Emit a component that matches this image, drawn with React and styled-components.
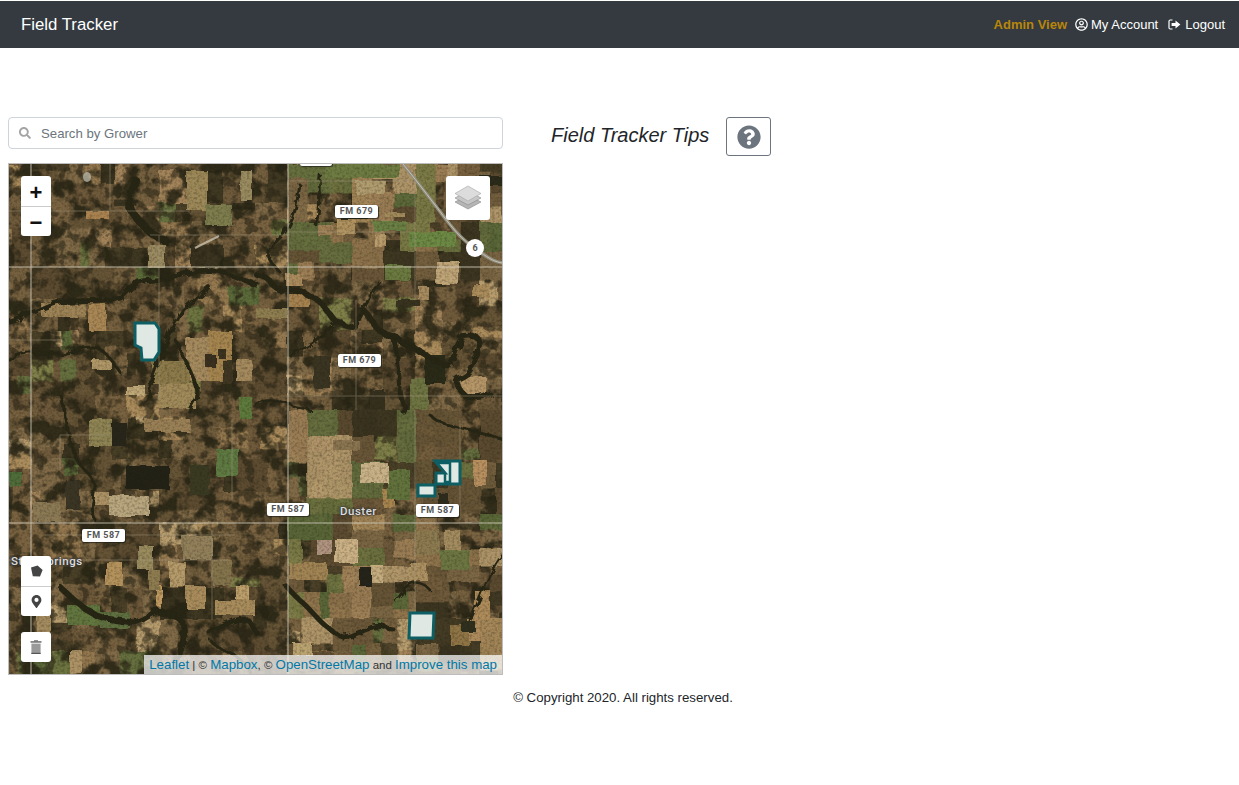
import React, { useMemo } from "react";
import styled, { createGlobalStyle } from "styled-components";
import { FaSearch, FaQuestionCircle, FaMapMarkerAlt, FaRegUserCircle } from "react-icons/fa";

const Global = createGlobalStyle`
  html, body { margin: 0; padding: 0; background: #fff; }
  body { font-family: "Liberation Sans", Arial, sans-serif; color: #212529; }
  * { box-sizing: border-box; }
`;

const Page = styled.div`
  padding-top: 1px;
  min-height: 785px;
  background: #fff;
`;
const Navbar = styled.nav`
  height: 47px;
  background: #343a40;
  display: flex;
  align-items: center;
  justify-content: space-between;
  padding: 0 14px 0 21px;
`;
const Brand = styled.a`
  color: #fff;
  font-size: 16.8px;
  line-height: 1;
  margin-top: 1px;
`;
const NavLinks = styled.div`
  display: flex;
  align-items: center;
  gap: 10px;
  font-size: 13px;
`;
const NavLink = styled.a`
  display: flex;
  align-items: center;
  gap: ${(p) => p.$gap || 4}px;
  color: ${(p) => (p.$admin ? "#b8860b" : "#fff")};
  font-weight: ${(p) => (p.$admin ? 700 : 400)};
  margin-right: ${(p) => (p.$admin ? "-2px" : "0")};
`;
const Main = styled.main`
  display: flex;
  align-items: flex-start;
  padding: 69px 8px 0;
`;
const LeftColumn = styled.section`
  width: 495px;
  display: flex;
  flex-direction: column;
  gap: 14px;
`;
const SearchBox = styled.label`
  height: 32px;
  border: 1px solid #ced4da;
  border-radius: 4px;
  display: flex;
  align-items: center;
  gap: 10px;
  padding: 0 10px;
  color: #a5a5a5;
`;
const SearchInput = styled.input`
  flex: 1;
  border: 0;
  outline: 0;
  padding: 0;
  font: 13.2px "Liberation Sans", Arial, sans-serif;
  color: #495057;
  &::placeholder { color: #6c757d; opacity: 1; }
`;
const MapFrame = styled.div`
  position: relative;
  height: 512px;
  border: 1px solid #bdbdbd;
  overflow: hidden;
  background: #5f5236;
`;
const Terrain = styled.svg`
  display: block;
  width: 493px;
  height: 510px;
`;
const ControlStack = styled.div`
  position: absolute;
  left: 12px;
  top: ${(p) => p.$top}px;
  width: 30px;
  background: #fff;
  border-radius: 3px;
  display: flex;
  flex-direction: column;
`;
const ControlButton = styled.div`
  height: 30px;
  display: flex;
  align-items: center;
  justify-content: center;
  color: ${(p) => p.$color || "#111"};
  font-size: ${(p) => p.$size || 22}px;
  font-weight: 700;
  line-height: 1;
  padding-top: ${(p) => p.$drop || 0}px;
  & + & { border-top: 1px solid #ccc; }
`;
const LayersButton = styled.div`
  position: absolute;
  right: 12px;
  top: 12px;
  width: 44px;
  height: 44px;
  background: #fff;
  border-radius: 3px;
  display: flex;
  align-items: center;
  justify-content: center;
`;
const RoadLabel = styled.span`
  position: absolute;
  left: ${(p) => p.$x}px;
  top: ${(p) => p.$y}px;
  width: ${(p) => p.$w || 43}px;
  height: 13px;
  background: #fff;
  border-radius: 2px;
  box-shadow: 0 0 1px #222, 1px 1px 1px rgba(30, 30, 20, 0.7);
  color: #555;
  font: 700 9px/13px Roboto, sans-serif;
  letter-spacing: 0.5px;
  text-align: center;
`;
const PlaceLabel = styled.span`
  position: absolute;
  left: ${(p) => p.$x}px;
  top: ${(p) => p.$y}px;
  color: #dcdcdc;
  font: 500 11.5px/14px Roboto, sans-serif;
  letter-spacing: 0.5px;
  text-shadow: 0 0 2px #3a3a3a, 0 0 2px #3a3a3a, 0 0 3px #3a3a3a;
  white-space: nowrap;
`;
const Shield = styled.span`
  position: absolute;
  left: 457px;
  top: 75px;
  width: 18px;
  height: 18px;
  background: #fff;
  border-radius: 50%;
  color: #555;
  font: 700 9px/18px Roboto, sans-serif;
  text-align: center;
`;
const Attribution = styled.div`
  position: absolute;
  right: 0;
  bottom: 0;
  height: 19px;
  padding: 0 5px;
  background: rgba(255, 255, 255, 0.72);
  font-size: 11.5px;
  line-height: 19px;
  color: #333;
  white-space: nowrap;
`;
const AttributionLink = styled.a`
  color: #0078a8;
  font-size: 13.3px;
`;
const TipsColumn = styled.section`
  margin-left: 48px;
  display: flex;
  align-items: center;
  gap: 17px;
`;
const TipsTitle = styled.h2`
  margin: 0 0 2px;
  font-size: 20px;
  font-weight: 400;
  font-style: italic;
  color: #212529;
`;
const TipsButton = styled.button`
  width: 45px;
  height: 39px;
  border: 1px solid #6c757d;
  border-radius: 3px;
  background: #fff;
  color: #6c757d;
  display: flex;
  align-items: center;
  justify-content: center;
  padding: 0;
  font-size: 24px;
`;
const Footer = styled.footer`
  margin-top: 15px;
  padding-left: 7px;
  text-align: center;
  font-size: 13.25px;
  line-height: 15px;
  color: #212529;
`;

function rng(seed) {
  let a = seed;
  return () => {
    a |= 0;
    a = (a + 0x6d2b79f5) | 0;
    let t = Math.imul(a ^ (a >>> 15), 1 | a);
    t = (t + Math.imul(t ^ (t >>> 7), 61 | t)) ^ t;
    return ((t ^ (t >>> 14)) >>> 0) / 4294967296;
  };
}

const DARK = ["#3f3822", "#3a3420", "#4a4028"];
const BROWN = ["#6f5a3b", "#7a6341", "#665436", "#5d4c31", "#75603f", "#806a47"];
const TAN = ["#a3845a", "#ab8c5c", "#94784f", "#b79c6e"];
const GREEN = ["#6d7440", "#5c6b3a", "#7f8049", "#66703f"];
const pick = (r, list) => list[Math.floor(r() * list.length)];

function baseColor(r) {
  const v = r();
  if (v < 0.12) return pick(r, DARK);
  if (v < 0.2) return pick(r, GREEN);
  if (v < 0.3) return pick(r, TAN);
  return pick(r, BROWN);
}
function cropColor(r) {
  const v = r();
  if (v < 0.1) return pick(r, DARK);
  if (v < 0.42) return pick(r, GREEN);
  if (v < 0.72) return pick(r, TAN);
  return pick(r, BROWN);
}
function subdivide(r, x, y, w, h, out, color) {
  if (w < 22 || h < 16 || (w < 50 && h < 40 && r() < 0.35)) {
    out.push({ x, y, w, h, c: color(r) });
    return;
  }
  const f = r() < 0.5 ? 0.5 : r() < 0.5 ? 0.3 : 0.7;
  if (w > h) {
    subdivide(r, x, y, w * f, h, out, color);
    subdivide(r, x + w * f, y, w * (1 - f), h, out, color);
  } else {
    subdivide(r, x, y, w, h * f, out, color);
    subdivide(r, x, y + h * f, w, h * (1 - f), out, color);
  }
}

const F = (x1, y1, x2, y2, c) => ({ x: x1, y: y1, w: x2 - x1, h: y2 - y1, c });
const HAND_FIELDS = [
  F(86, 211, 109, 219, "#ab8350"), F(89, 304, 106, 331, "#a98755"), F(42, 304, 86, 317, "#9d8356"),
  F(209, 331, 232, 381, "#a5854f"), F(186, 337, 209, 381, "#a58a5e"), F(236, 360, 252, 381, "#a58a5e"),
  F(218, 349, 226, 358, "#3d3420"), F(222, 360, 232, 383, "#3f3722"), F(152, 360, 190, 384, "#8c7a4a"),
  F(159, 384, 195, 408, "#a08a5a"), F(126, 386, 146, 396, "#c0a878"), F(93, 360, 112, 370, "#b09768"),
  F(148, 244, 165, 268, "#9a8a60"), F(186, 171, 208, 210, "#9c8858"), F(205, 205, 232, 225, "#7d7d4e"),
  F(240, 397, 252, 419, "#5d7a3c"), F(240, 170, 252, 200, "#9a8c60"),
  F(336, 217, 356, 234, "#b0925f"), F(374, 234, 386, 246, "#b99c6c"), F(436, 261, 459, 284, "#bfa577"),
  F(418, 286, 428, 299, "#a88c60"), F(473, 284, 489, 297, "#ab8d5c"), F(459, 377, 486, 394, "#b59668"),
  F(286, 274, 303, 286, "#a98a5c"), F(289, 294, 309, 307, "#a5824f"), F(356, 181, 386, 194, "#b09c6e"),
  F(409, 232, 456, 247, "#6d8a45"), F(373, 221, 406, 231, "#6a8044"), F(325, 164, 400, 178, "#6e7c42"),
  F(288, 164, 320, 178, "#66703e"), F(385, 213, 405, 217, "#a08a5a"), F(385, 265, 410, 280, "#6b7a40"),
  F(318, 225, 332, 236, "#9e8056"), F(256, 308, 288, 318, "#8e7e50"), F(410, 378, 428, 410, "#6e7442"),
  F(360, 463, 388, 483, "#c9b288"), F(335, 540, 358, 563, "#cbb185"), F(317, 540, 332, 555, "#b09480"),
  F(370, 565, 383, 583, "#c5ad7f"), F(290, 563, 327, 580, "#a18454"), F(473, 460, 487, 485, "#b89060"),
  F(293, 643, 312, 655, "#bba471"), F(410, 563, 427, 580, "#ad9162"), F(310, 440, 333, 450, "#b09368"),
  F(333, 440, 360, 450, "#8a7550"), F(383, 490, 395, 507, "#a98650"), F(415, 530, 440, 555, "#8c7a50"),
  F(445, 530, 460, 550, "#a38c5f"), F(474, 590, 490, 620, "#ad8b5a"), F(440, 550, 470, 570, "#6c7642"),
  F(388, 470, 410, 500, "#62733d"), F(450, 625, 470, 645, "#8f7445"), F(468, 620, 482, 640, "#ad8b5c"),
  F(106, 562, 122, 586, "#b4925c"), F(169, 562, 186, 586, "#b59a6a"), F(156, 586, 162, 612, "#c09a60"),
  F(186, 586, 205, 609, "#a98c5c"), F(236, 586, 249, 609, "#bd9f6b"), F(92, 492, 109, 505, "#ac9265"),
  F(109, 496, 149, 516, "#b8a67e"), F(182, 536, 212, 559, "#92805a"), F(89, 419, 112, 446, "#8e8454"),
  F(216, 449, 239, 476, "#5f7a42"), F(9, 472, 22, 486, "#4f6e3a"), F(145, 419, 190, 432, "#9a8056"),
  F(212, 560, 232, 585, "#84744c"), F(138, 545, 153, 570, "#9a8c5e"), F(149, 570, 160, 590, "#8e7c50"),
  F(215, 600, 255, 615, "#a88c5c"), F(67, 605, 100, 625, "#62763f"), F(70, 650, 82, 674, "#ad9265"),
  F(36, 608, 50, 634, "#a48c60"), F(100, 612, 130, 628, "#5f7040"), F(34, 502, 60, 522, "#8c7a55"),
];

const DARK_PATCHES = [
  F(126, 466, 169, 489, "#232216"), F(112, 422, 126, 446, "#28261a"), F(360, 567, 372, 587, "#25241a"),
  F(480, 176, 503, 186, "#2a2a1a"), F(425, 355, 445, 384, "#2a2a18"), F(190, 465, 210, 495, "#3a3a22"),
  F(369, 390, 385, 410, "#35301e"), F(314, 355, 330, 388, "#3a3522"), F(462, 622, 476, 632, "#30301e"),
  F(66, 480, 80, 510, "#3a3524"), F(206, 355, 216, 368, "#3a3020"), F(340, 215, 368, 219, "#35331f"),
  F(395, 300, 420, 306, "#37331f"), F(438, 493, 448, 507, "#2e2c1c"),
];

const RIVERS = [
  ["M256,274 C262,276 267,278 269,280 S274,288 278,289 S295,289 299,291 S314,297 320,302 S330,318 336,321 S350,328 353,327 S360,312 363,311 S372,322 376,327 S388,336 393,337 S402,342 406,344 S422,352 429,357 S445,366 449,364 S458,340 463,337 S478,336 479,341 S474,364 469,371 S455,378 456,381 S462,396 469,397 S484,396 489,394", 6],
  ["M256,284 C240,280 228,272 216,271 S200,270 196,271 S184,274 176,277 S150,280 142,281 S128,292 122,297 S80,300 66,301 S40,310 29,314 S14,320 9,321", 5],
  ["M209,287 C198,296 192,302 186,307 S180,316 176,321 S170,336 166,344 S157,368 152,381 S150,392 149,397", 4],
  ["M176,341 C182,352 190,370 196,384 S193,402 190,412", 3.5],
  ["M136,181 C132,190 130,198 129,204 S142,224 149,231 S160,238 166,241", 8],
  ["M62,589 C70,596 78,604 86,609 S100,618 109,619 S130,623 136,622 S150,614 156,612 S172,616 179,619 S184,638 182,646 S178,656 176,659", 6],
  ["M209,632 C220,626 232,620 242,619 S252,628 256,632", 5],
  ["M287,587 C294,595 298,599 303,603 S320,622 327,627 S338,636 343,637 S364,630 373,627 S388,629 393,630", 5],
  ["M393,337 C398,350 398,370 400,390 S408,405 404,412", 5],
  ["M363,311 C368,300 372,290 380,282", 3],
  ["M290,355 C310,345 325,335 336,321", 3],
  ["M300,185 C296,205 295,225 278,240 S270,262 280,272", 3],
  ["M320,175 C318,190 322,205 316,225", 2.5],
  ["M10,360 C30,345 45,360 70,352 S100,342 120,372", 3],
  ["M60,395 C70,420 65,450 85,470 S88,500 95,520", 3],
  ["M470,620 C480,600 490,570 503,555", 3],
  ["M395,600 C405,585 415,575 430,590", 2.5],
  ["M430,415 C445,430 470,425 503,440", 3],
  ["M256,404 C270,395 285,405 310,410", 2.5],
  ["M210,640 C222,655 240,650 252,675", 3],
];
const MAIN_ROADS = ["M31,164V675", "M288,164V675", "M9,267H503", "M9,523H503"];
const MINOR_ROADS = [
  "M159,235V400", "M110,164V210", "M9,211H190", "M150,235H290", "M415,180V300", "M415,410V640",
  "M460,420V520", "M356,300V410", "M288,396H503", "M60,435H110", "M60,435V470", "M9,560H230",
  "M232,419V500", "M212,530V620", "M9,340H60", "M288,232H410", "M290,181H412", "M45,535H235",
];

const sRGB = { colorInterpolationFilters: "sRGB" };

function MapTerrain() {
  const { base, crops } = useMemo(() => {
    const r = rng(77);
    const b = [];
    const c = [];
    for (let sx = -97; sx < 503; sx += 128) {
      for (let sy = 11; sy < 680; sy += 128) {
        subdivide(r, sx, sy, 128, 128, b, baseColor);
      }
    }
    for (let sx = 288; sx < 503; sx += 64) {
      for (let sy = 164; sy < 280; sy += 58) subdivide(r, sx, sy, 64, 58, c, cropColor);
      for (let sy = 410; sy < 620; sy += 52) subdivide(r, sx, sy, 64, 52, c, cropColor);
    }
    return { base: b, crops: c };
  }, []);
  return (
    <Terrain viewBox="9 164 493 510" preserveAspectRatio="none">
      <defs>
        <filter id="all" x="0" y="0" width="100%" height="100%" {...sRGB}>
          <feGaussianBlur stdDeviation="0.55" />
        </filter>
        <filter id="wobble" x="-5%" y="-5%" width="110%" height="110%" {...sRGB}>
          <feTurbulence type="fractalNoise" baseFrequency="0.06" numOctaves="2" seed="5" result="n" />
          <feDisplacementMap in="SourceGraphic" in2="n" scale="5" />
        </filter>
        <filter id="river" x="-5%" y="-5%" width="110%" height="110%" {...sRGB}>
          <feTurbulence type="fractalNoise" baseFrequency="0.1" numOctaves="3" seed="3" result="n" />
          <feDisplacementMap in="SourceGraphic" in2="n" scale="7" />
        </filter>
        <filter id="woods" x="0" y="0" width="100%" height="100%" {...sRGB}>
          <feTurbulence type="fractalNoise" baseFrequency="0.05" numOctaves="4" seed="11" />
          <feColorMatrix values="0 0 0 0 0.15  0 0 0 0 0.14  0 0 0 0 0.08  6 0 0 0 -3" />
        </filter>
        <filter id="woods2" x="0" y="0" width="100%" height="100%" {...sRGB}>
          <feTurbulence type="fractalNoise" baseFrequency="0.09" numOctaves="3" seed="23" />
          <feColorMatrix values="0 0 0 0 0.17  0 0 0 0 0.15  0 0 0 0 0.09  0 7 0 0 -3.6" />
        </filter>
        <filter id="grain" x="0" y="0" width="100%" height="100%" {...sRGB}>
          <feTurbulence type="fractalNoise" baseFrequency="0.4" numOctaves="2" seed="2" />
          <feColorMatrix values="0 0 0 0 0.12  0 0 0 0 0.1  0 0 0 0 0.05  0 0 0 1.8 -0.75" />
        </filter>
      </defs>
      <g filter="url(#all)">
        <rect x="9" y="164" width="493" height="510" fill="#6a573a" />
        <g filter="url(#wobble)">
          {base.map((f, i) => (
            <rect key={i} x={f.x} y={f.y} width={f.w + 0.5} height={f.h + 0.5} fill={f.c} />
          ))}
        </g>
        <rect x="9" y="164" width="493" height="510" filter="url(#woods)" opacity="0.85" />
        <rect x="9" y="164" width="493" height="510" filter="url(#woods2)" opacity="0.6" />
        <g opacity="0.9" filter="url(#wobble)">
          {crops.map((f, i) => (i % 5 === 4 ? null : (
            <rect key={i} x={f.x} y={f.y} width={f.w + 0.5} height={f.h + 0.5} fill={f.c} />
          )))}
        </g>
        <g filter="url(#wobble)">
          {HAND_FIELDS.map((f, i) => (
            <rect key={i} x={f.x} y={f.y} width={f.w} height={f.h} fill={f.c} />
          ))}
          {DARK_PATCHES.map((f, i) => (
            <rect key={i} x={f.x} y={f.y} width={f.w} height={f.h} fill={f.c} />
          ))}
        </g>
        <g filter="url(#river)" fill="none" strokeLinecap="round">
          {RIVERS.map(([d, w], i) => (
            <path key={i} d={d} stroke="#272615" strokeWidth={w} />
          ))}
        </g>
        <rect x="9" y="164" width="493" height="510" filter="url(#grain)" opacity="0.4" />
        <g fill="none" strokeWidth="1" stroke="#a89c80" opacity="0.45">
          {MINOR_ROADS.map((d, i) => <path key={i} d={d} />)}
        </g>
        <path d="M403,164 C420,185 435,205 448,222 S470,245 480,252 S495,262 503,263" fill="none" stroke="#8f8c7c" strokeWidth="3.5" />
        <path d="M403,164 C420,185 435,205 448,222 S470,245 480,252 S495,262 503,263" fill="none" stroke="#c5c2b4" strokeWidth="1" />
        <path d="M219,236 L195,248" fill="none" stroke="#c8c2ae" strokeWidth="2" opacity="0.8" />
        <ellipse cx="87" cy="177" rx="4" ry="5" fill="#c8c5b6" opacity="0.7" />
      </g>
      <g fill="none" strokeWidth="1" stroke="#d2cdbc" opacity="0.85">
        {MAIN_ROADS.map((d, i) => <path key={i} d={d} />)}
      </g>
      <g fill="#dfe8e2" stroke="#0d5f64" strokeWidth="3" strokeLinejoin="miter">
        <polygon points="135,323 155,323 159,329 159,352 154,360 142,360 141,348 135,345" />
        <polygon points="410,613 434,613 433,638 409,638" />
        <polygon points="418,485 435,485 435,496 418,496" />
        <polygon points="435,461 460,461 460,484 436,484 436,473 445,473" />
        <path d="M436,463 H450 V482 H445 V473" fill="none" strokeWidth="2.5" />
      </g>
    </Terrain>
  );
}

const LogoutIcon = () => (
  <svg width="13" height="11" viewBox="0 0 13 11" aria-hidden="true">
    <path d="M4.5 1H2.2C1.5 1 1 1.5 1 2.2v6.6C1 9.5 1.5 10 2.2 10h2.3" fill="none" stroke="#fff" strokeWidth="1.2" />
    <path d="M3.6 4h3.9V1.6L12.4 5.5 7.5 9.4V7H3.6z" fill="#fff" />
  </svg>
);
const LayersIcon = () => (
  <svg width="28" height="28" viewBox="0 0 28 28" aria-hidden="true">
    <path d="M14 11 L27 18 L14 25 L1 18Z" fill="#b5b5b5" stroke="#8a8a8a" strokeWidth="0.6" />
    <path d="M14 7 L27 14 L14 21 L1 14Z" fill="#c6c6c6" stroke="#8a8a8a" strokeWidth="0.6" />
    <path d="M14 2 L27 9.5 L14 17 L1 9.5Z" fill="#dcdcdc" stroke="#a5a5a5" strokeWidth="0.6" />
  </svg>
);
const PentagonIcon = () => (
  <svg width="13" height="12" viewBox="0 0 13 12" aria-hidden="true">
    <path d="M1 2.6 7.6 0.4 12.6 5 10 11.4 2.8 11.2Z" fill="#444" />
  </svg>
);
const TrashIcon = () => (
  <svg width="12" height="14" viewBox="0 0 12 14" aria-hidden="true">
    <rect x="4" y="0.3" width="4" height="1" fill="#666" />
    <rect x="0.5" y="1.3" width="11" height="1.3" fill="#555" />
    <path d="M1.4 3.6h9.2V14H1.4z" fill="#999" />
    <rect x="1.4" y="12.8" width="9.2" height="1.2" fill="#555" />
  </svg>
);

export default function App() {
  return (
    <Page>
      <Global />
      <Navbar>
        <Brand>Field Tracker</Brand>
        <NavLinks>
          <NavLink $admin>Admin View</NavLink>
          <NavLink $gap={3}><FaRegUserCircle size={13} />My Account</NavLink>
          <NavLink><LogoutIcon />Logout</NavLink>
        </NavLinks>
      </Navbar>
      <Main>
        <LeftColumn>
          <SearchBox>
            <FaSearch size={12} />
            <SearchInput placeholder="Search by Grower" />
          </SearchBox>
          <MapFrame>
            <MapTerrain />
            <RoadLabel $x={291} $y={-11} $w={32} />
            <RoadLabel $x={326} $y={41}>FM 679</RoadLabel>
            <RoadLabel $x={329} $y={190}>FM 679</RoadLabel>
            <RoadLabel $x={258} $y={339} $w={42}>FM 587</RoadLabel>
            <RoadLabel $x={407} $y={340}>FM 587</RoadLabel>
            <RoadLabel $x={73} $y={365}>FM 587</RoadLabel>
            <PlaceLabel $x={331} $y={340}>Duster</PlaceLabel>
            <PlaceLabel $x={2} $y={390}>Stag Springs</PlaceLabel>
            <Shield>6</Shield>
            <ControlStack $top={12}>
              <ControlButton $drop={4}>+</ControlButton>
              <ControlButton $drop={3}>−</ControlButton>
            </ControlStack>
            <LayersButton><LayersIcon /></LayersButton>
            <ControlStack $top={392}>
              <ControlButton><PentagonIcon /></ControlButton>
              <ControlButton $color="#444" $size={13}><FaMapMarkerAlt /></ControlButton>
            </ControlStack>
            <ControlStack $top={468}>
              <ControlButton><TrashIcon /></ControlButton>
            </ControlStack>
            <Attribution>
              <AttributionLink>Leaflet</AttributionLink> | © <AttributionLink>Mapbox</AttributionLink>, © <AttributionLink>OpenStreetMap</AttributionLink> and <AttributionLink>Improve this map</AttributionLink>
            </Attribution>
          </MapFrame>
        </LeftColumn>
        <TipsColumn>
          <TipsTitle>Field Tracker Tips</TipsTitle>
          <TipsButton aria-label="Tips"><FaQuestionCircle /></TipsButton>
        </TipsColumn>
      </Main>
      <Footer>© Copyright 2020. All rights reserved.</Footer>
    </Page>
  );
}
